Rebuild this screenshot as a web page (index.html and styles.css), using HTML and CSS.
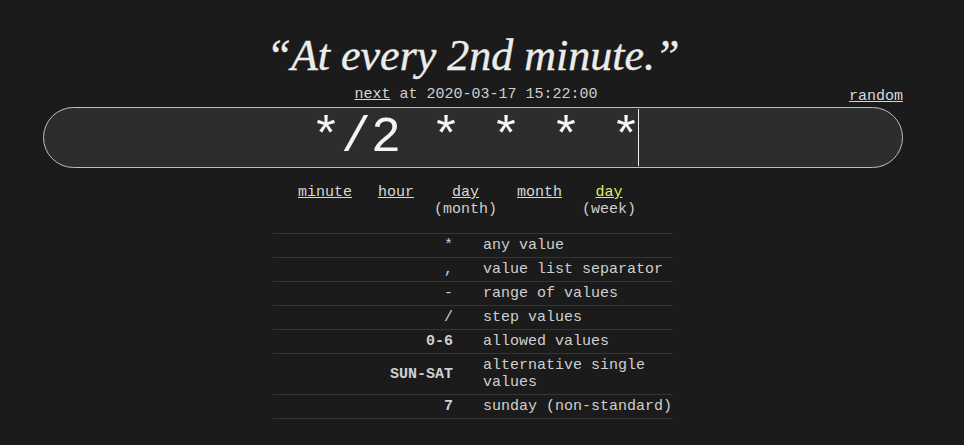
FILE: index.html
```html
<!DOCTYPE html>
<html>
<head>
<meta charset="utf-8">
<link rel="stylesheet" href="styles.css">
</head>
<body>
<div class="wrap">
  <h1 class="human">“At every 2nd minute.”</h1>
  <div class="nextline">
    <div class="next"><a href="#">next</a> at 2020-03-17 15:22:00</div>
    <a class="random" href="#">random</a>
  </div>
  <div class="inputbox">
    <span class="expr">*/2 * * * *</span><span class="caret"></span>
  </div>
  <div class="parts">
    <div class="part first"><a href="#">minute</a></div>
    <div class="part"><a href="#">hour</a></div>
    <div class="part"><a href="#">day</a><br>(month)</div>
    <div class="part"><a href="#">month</a></div>
    <div class="part"><a href="#" class="active">day</a><br>(week)</div>
  </div>
  <table class="legend">
    <tr><th>*</th><td>any value</td></tr>
    <tr><th>,</th><td>value list separator</td></tr>
    <tr><th>-</th><td>range of values</td></tr>
    <tr><th>/</th><td>step values</td></tr>
    <tr><th class="b">0-6</th><td>allowed values</td></tr>
    <tr><th class="b">SUN-SAT</th><td>alternative single values</td></tr>
    <tr><th class="b">7</th><td>sunday (non-standard)</td></tr>
  </table>
</div>
</body>
</html>
```
FILE: styles.css
```css
html, body {
  margin: 0;
  background: #1b1b1b;
}
body {
  padding-right: 18px;
  color: #cfcfcf;
  font-family: "Liberation Mono", "Courier New", monospace;
  font-size: 15px;
}
.wrap {
  width: 860px;
  margin: 0 auto;
}
a {
  color: #d8d8d8;
  text-decoration: underline;
}
.human {
  margin: 0;
  padding-top: 31px;
  text-align: center;
  font-family: "Liberation Serif", "Times New Roman", serif;
  font-style: italic;
  font-weight: normal;
  font-size: 44px;
  line-height: 50px;
  color: #ececec;
  -webkit-text-stroke: 0.4px #ececec;
}
.nextline {
  position: relative;
  height: 22px;
  margin-top: 3px;
  line-height: 22px;
}
.next {
  text-align: center;
  padding-left: 6px;
}
.random {
  position: absolute;
  right: 0;
  top: 2px;
}
.inputbox {
  margin-top: 1px;
  height: 59px;
  border: 1px solid #bdbdbd;
  border-radius: 31px;
  background: #2d2d2d;
  display: flex;
  justify-content: center;
  align-items: center;
  color: #f5f5f5;
}
.expr {
  font-family: "Liberation Mono", monospace;
  font-size: 50px;
  line-height: 59px;
  white-space: pre;
  margin-left: 4px;
}
.caret {
  width: 1px;
  height: 57px;
  background: #eee;
  margin-left: -3px;
}
.parts {
  display: flex;
  justify-content: center;
  gap: 20px;
  margin-top: 16px;
  line-height: 17px;
  text-align: center;
  padding-right: 12px;
}
.part.first {
  margin-right: 6px;
}
.part a.active {
  color: #e8e86a;
}
.legend {
  width: 400px;
  margin: 15px auto 0;
  border-collapse: collapse;
  line-height: 17px;
}
.legend tr {
  border-top: 1px solid #353535;
  border-bottom: 1px solid #353535;
}
.legend th {
  width: 165px;
  text-align: right;
  padding: 3px 15px 3px 15px;
  font-weight: normal;
  vertical-align: middle;
}
.legend th.b {
  font-weight: bold;
}
.legend td {
  text-align: left;
  padding: 3px 0 3px 15px;
}
```
